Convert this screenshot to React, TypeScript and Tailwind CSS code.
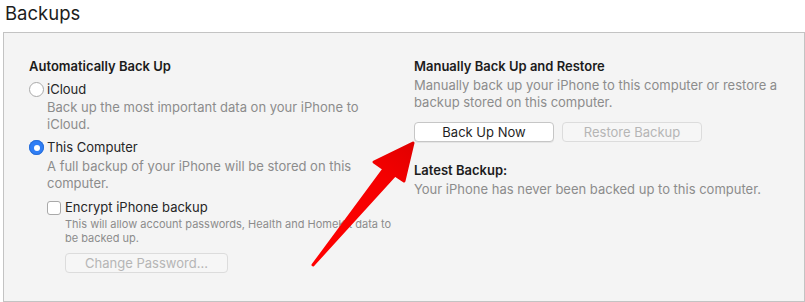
import React from "react";

function Radio({ checked }: { checked?: boolean }) {
    return checked ? (
        <span className="flex h-[15px] w-[15px] items-center justify-center rounded-full bg-[#2f7ef6] shadow-[inset_0_0_0_1px_#2a6fd8]">
            <span className="h-[6px] w-[6px] rounded-full bg-white" />
        </span>
    ) : (
        <span className="h-[15px] w-[15px] rounded-full border border-[#a9a9a9] bg-white" />
    );
}

export default function App() {
    return (
        <div className="relative h-[302px] w-[805px] overflow-hidden bg-white text-[13px] leading-[17px] text-[#262626] font-['Inter','Liberation_Sans',Arial,sans-serif]">
            <h1 className="pl-[5px] text-[18.5px] leading-[26px] text-[#1d1d1d]">Backups</h1>

            <div className="ml-[3px] mt-[6px] flex h-[270px] w-[802px] border border-[#c3c3c3] bg-[#f4f4f4] pl-[25px] pt-[25px]">
                {/* left column */}
                <div className="flex w-[385px] flex-col">
                    <p className="font-semibold text-[#1c1c1c]">Automatically Back Up</p>

                    <div className="mt-[6px] flex items-center gap-[3px]">
                        <Radio />
                        <span>iCloud</span>
                    </div>
                    <p className="mt-[1px] pl-[18px] text-[#8c8c8c] whitespace-nowrap">
                        Back up the most important data on your iPhone to
                        <br />
                        iCloud.
                    </p>

                    <div className="mt-[6px] flex items-center gap-[3px]">
                        <Radio checked />
                        <span>This Computer</span>
                    </div>
                    <p className="mt-[2px] pl-[18px] text-[#8c8c8c] whitespace-nowrap">
                        A full backup of your iPhone will be stored on this
                        <br />
                        computer.
                    </p>

                    <div className="mt-[7px] flex items-center gap-[4px] pl-[18px]">
                        <span className="h-[14px] w-[14px] rounded-[3px] border border-[#a9a9a9] bg-white" />
                        <span>Encrypt iPhone backup</span>
                    </div>
                    <p className="mt-[1px] pl-[36px] text-[11px] leading-[14px] text-[#8c8c8c] whitespace-nowrap">
                        This will allow account passwords, Health and HomeKit data to
                        <br />
                        be backed up.
                    </p>
                    <div className="ml-[36px] mt-[8px] flex h-[20px] w-[163px] items-center justify-center rounded-[4px] border border-[#dcdcdc] bg-[#f6f6f6] text-[#b5b5b5]">
                        Change Password...
                    </div>
                </div>

                {/* right column */}
                <div className="flex flex-col">
                    <p className="font-semibold text-[#1c1c1c]">Manually Back Up and Restore</p>
                    <p className="mt-[2px] text-[#8c8c8c] whitespace-nowrap">
                        Manually back up your iPhone to this computer or restore a
                        <br />
                        backup stored on this computer.
                    </p>
                    <div className="mt-[11px] flex gap-[8px]">
                        <button className="flex h-[20px] w-[140px] items-center justify-center rounded-[4px] border border-[#c6c6c6] bg-white text-[#1f1f1f] shadow-[0_1px_0_rgba(0,0,0,0.06)]">
                            Back Up Now
                        </button>
                        <button className="flex h-[20px] w-[140px] items-center justify-center rounded-[4px] border border-[#dcdcdc] bg-[#f6f6f6] text-[#b5b5b5]">
                            Restore Backup
                        </button>
                    </div>
                    <p className="mt-[20px] font-semibold text-[#1c1c1c]">Latest Backup:</p>
                    <p className="mt-[2px] text-[#8c8c8c] whitespace-nowrap">Your iPhone has never been backed up to this computer.</p>
                </div>
            </div>

            {/* red annotation arrow */}
            <svg className="pointer-events-none absolute left-0 top-0" width="805" height="302" viewBox="0 0 805 302">
                <defs>
                    <linearGradient id="ar" x1="313" y1="265" x2="414" y2="142" gradientUnits="userSpaceOnUse">
                        <stop offset="0" stopColor="#ff0000" />
                        <stop offset="0.7" stopColor="#f50000" />
                        <stop offset="1" stopColor="#e00000" />
                    </linearGradient>
                </defs>
                <path
                    d="M313 265 L384 169 L374 162 L413 143 L404 181 L395 175 Z"
                    fill="url(#ar)"
                    stroke="url(#ar)"
                    strokeWidth="3"
                    strokeLinejoin="round"
                />
            </svg>
        </div>
    );
}
